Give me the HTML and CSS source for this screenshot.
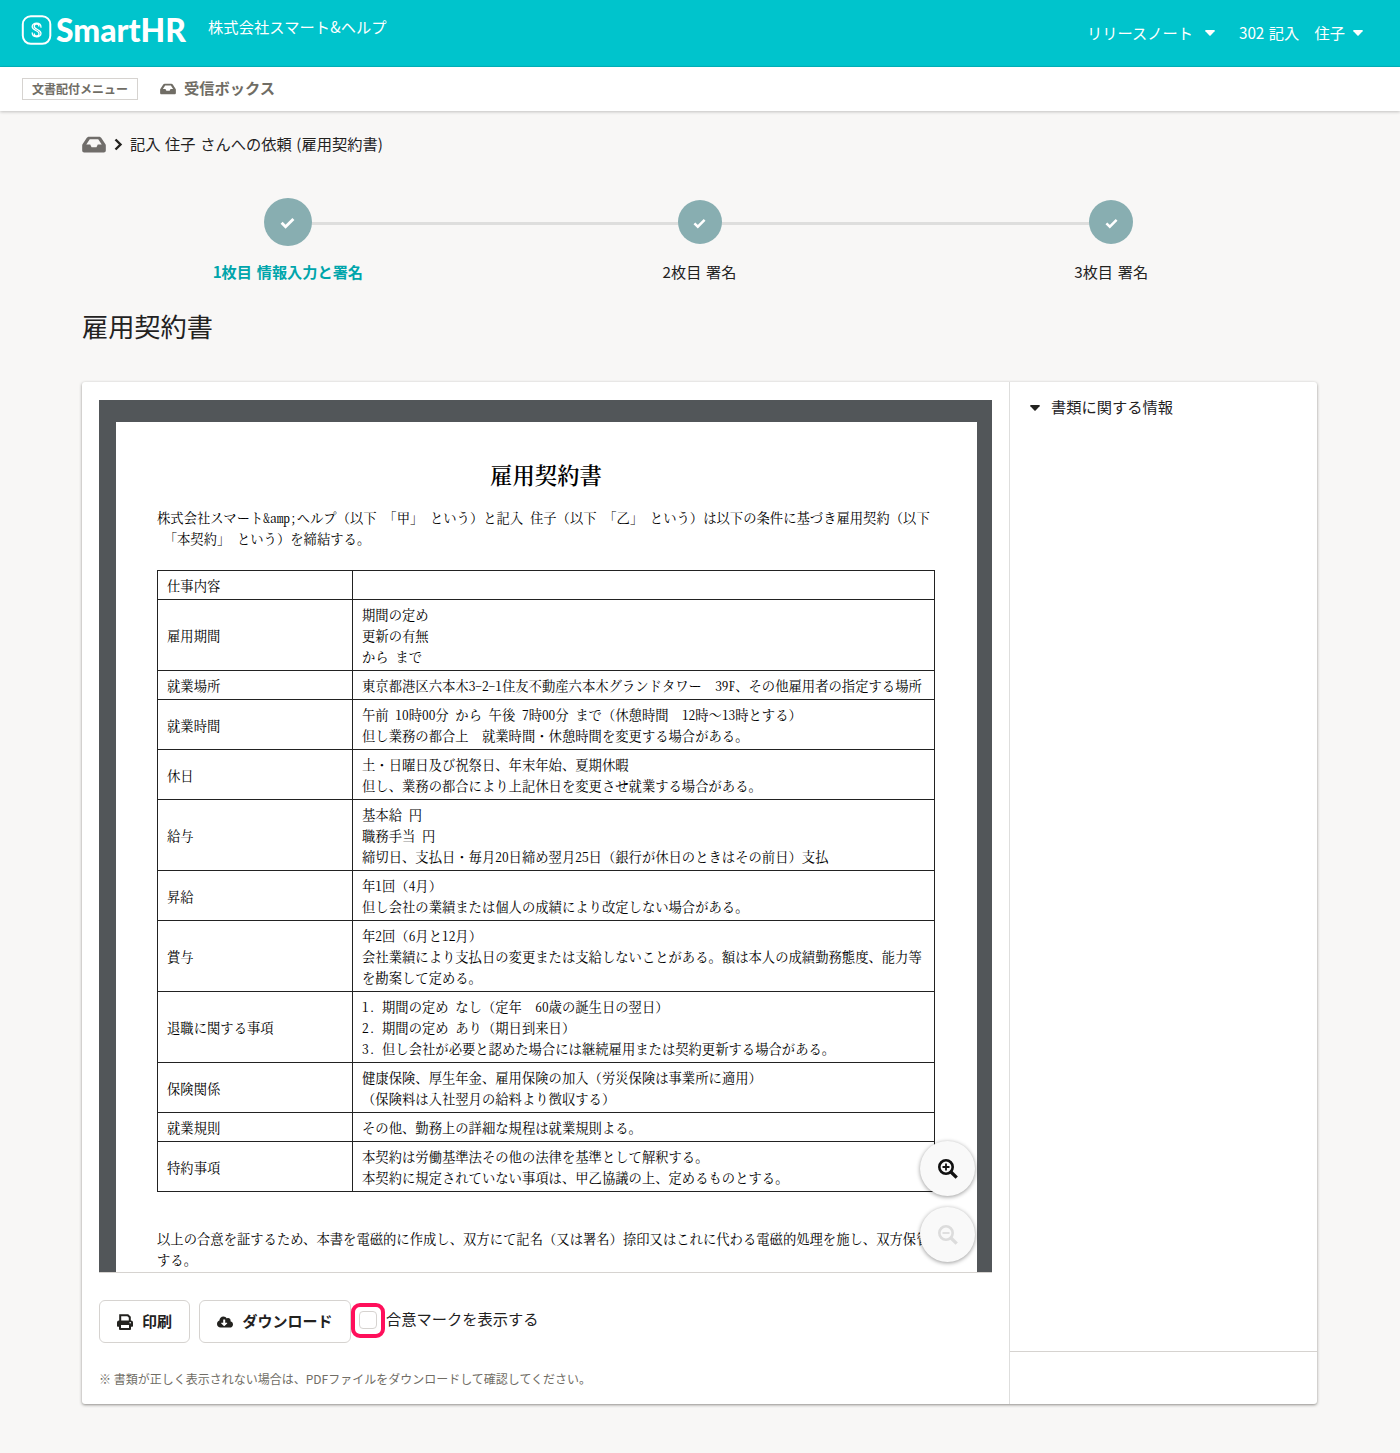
FILE: index.html
```html
<!DOCTYPE html>
<html lang="ja">
<head>
<meta charset="utf-8">
<title>雇用契約書 | SmartHR</title>
<link rel="stylesheet" href="styles.css">
</head>
<body>
<svg class="symbols" aria-hidden="true">
  <symbol id="inbox" viewBox="0 0 576 512"><path fill="currentColor" d="M568 251.8 463 93.9C451 75 431 64 409 64H167c-22 0-42 11-54 29.9L8 251.8A48 48 0 0 0 0 278.500V400c0 26.500 21.500 48 48 48h480c26.500 0 48-21.500 48-48V278.500a48 48 0 0 0-8-26.700zM185 128h206l85 128H380l-32 64H228l-32-64H100z"/></symbol>
  <symbol id="caret" viewBox="0 0 10 6"><path fill="currentColor" d="M.8 0h8.400q1 .3.400 1.200L5.600 5.600q-.6.500-1.200 0L.4 1.200Q-.2.300.8 0z"/></symbol>
  <symbol id="check" viewBox="0 0 14 11"><path d="M1.500 5.300 5.200 9 12.500 1.700" fill="none" stroke="currentColor" stroke-width="2.700"/></symbol>
  <symbol id="lens" viewBox="0 0 20 20"><circle cx="8" cy="8" r="6.700" fill="none" stroke="currentColor" stroke-width="2.600"/><path d="m13 13 5.700 5.700" stroke="currentColor" stroke-width="3.300"/></symbol>
</svg>

<header class="header">
  <div class="brand">
    <svg class="logo" viewBox="0 0 170 40" role="img" aria-label="SmartHR">
      <rect x="2.800" y="6.300" width="27.500" height="27.500" rx="8" fill="none" stroke="#fff" stroke-width="2"/>
      <path d="M21 17.200c0-5.200-8.800-5.200-8.800-.7 0 4.300 6.800 3.600 6.800 7.300 0 2.900-4.600 2.900-4.700.2M12.200 22.800c0 5.200 8.800 5.200 8.800.7 0-4.300-6.800-3.600-6.800-7.300 0-2.900 4.600-2.900 4.700-.2" fill="none" stroke="#fff" stroke-width="1.300" stroke-linecap="round"/>
      <text class="logo-text" x="36" y="31.500" textLength="130" lengthAdjust="spacingAndGlyphs">SmartHR</text>
    </svg>
    <span class="company">株式会社スマート&amp;ヘルプ</span>
  </div>
  <nav class="account">
    <span class="menu release"><span>リリースノート</span><svg class="caret"><use href="#caret"/></svg></span>
    <span class="menu user"><span>302 記入　住子</span><svg class="caret"><use href="#caret"/></svg></span>
  </nav>
</header>

<nav class="subnav">
  <span class="tag">文書配付メニュー</span>
  <svg class="inbox-small"><use href="#inbox"/></svg>
  <span class="inbox-label">受信ボックス</span>
</nav>

<main class="main">
  <div class="crumbs">
    <svg class="inbox-large"><use href="#inbox"/></svg>
    <svg class="chevron" viewBox="0 0 9 13"><path d="m1.500 1.500 5 5-5 5" fill="none" stroke="currentColor" stroke-width="2.400"/></svg>
    <span class="crumb-text">記入 住子 さんへの依頼 (雇用契約書)</span>
  </div>

  <ol class="steps">
    <li class="step current"><span class="dot"><svg class="check"><use href="#check"/></svg></span><span class="step-label">1枚目 情報入力と署名</span></li>
    <li class="step"><span class="dot"><svg class="check"><use href="#check"/></svg></span><span class="step-label">2枚目 署名</span></li>
    <li class="step"><span class="dot"><svg class="check"><use href="#check"/></svg></span><span class="step-label">3枚目 署名</span></li>
  </ol>

  <h1 class="title">雇用契約書</h1>

  <section class="panel">
    <div class="left">
      <div class="viewer">
        <article class="paper">
          <h2 class="paper-title">雇用契約書</h2>
          <p class="line">株式会社スマート<span class="hw">&amp;amp;</span>ヘルプ（以下 「甲」 という）と記入 住子（以下 「乙」 という）は以下の条件に基づき雇用契約（以下</p>
          <p class="line"> 「本契約」 という）を締結する。</p>
          <table class="terms">
            <tr><th>仕事内容</th><td></td></tr>
            <tr><th>雇用期間</th><td>期間の定め<br>更新の有無<br>から まで</td></tr>
            <tr><th>就業場所</th><td>東京都港区六本木<span class="hw">3-2-1</span>住友不動産六本木グランドタワー　<span class="hw">39F</span>、その他雇用者の指定する場所</td></tr>
            <tr><th>就業時間</th><td>午前 <span class="hw">10</span>時<span class="hw">00</span>分 から 午後 <span class="hw">7</span>時<span class="hw">00</span>分 まで（休憩時間　<span class="hw">12</span>時～<span class="hw">13</span>時とする）<br>但し業務の都合上　就業時間・休憩時間を変更する場合がある。</td></tr>
            <tr><th>休日</th><td>土・日曜日及び祝祭日、年末年始、夏期休暇<br>但し、業務の都合により上記休日を変更させ就業する場合がある。</td></tr>
            <tr><th>給与</th><td>基本給 円<br>職務手当 円<br>締切日、支払日・毎月<span class="hw">20</span>日締め翌月<span class="hw">25</span>日（銀行が休日のときはその前日）支払</td></tr>
            <tr><th>昇給</th><td>年<span class="hw">1</span>回（<span class="hw">4</span>月）<br>但し会社の業績または個人の成績により改定しない場合がある。</td></tr>
            <tr><th>賞与</th><td>年<span class="hw">2</span>回（<span class="hw">6</span>月と<span class="hw">12</span>月）<br>会社業績により支払日の変更または支給しないことがある。額は本人の成績勤務態度、能力等<br>を勘案して定める。</td></tr>
            <tr><th>退職に関する事項</th><td><span class="hw">1.</span> 期間の定め なし（定年　<span class="hw">60</span>歳の誕生日の翌日）<br><span class="hw">2.</span> 期間の定め あり（期日到来日）<br><span class="hw">3.</span> 但し会社が必要と認めた場合には継続雇用または契約更新する場合がある。</td></tr>
            <tr><th>保険関係</th><td>健康保険、厚生年金、雇用保険の加入（労災保険は事業所に適用）<br>（保険料は入社翌月の給料より徴収する）</td></tr>
            <tr><th>就業規則</th><td>その他、勤務上の詳細な規程は就業規則よる。</td></tr>
            <tr><th>特約事項</th><td>本契約は労働基準法その他の法律を基準として解釈する。<br>本契約に規定されていない事項は、甲乙協議の上、定めるものとする。</td></tr>
          </table>
          <p class="line">以上の合意を証するため、本書を電磁的に作成し、双方にて記名（又は署名）捺印又はこれに代わる電磁的処理を施し、双方保管</p>
          <p class="line">する。</p>
        </article>
        <div class="zoom">
          <button class="round" aria-label="拡大"><svg class="lens" viewBox="0 0 20 20"><use href="#lens"/><path d="M4.500 8h7M8 4.500v7" stroke="currentColor" stroke-width="1.800"/></svg></button>
          <button class="round off" aria-label="縮小"><svg class="lens" viewBox="0 0 20 20"><use href="#lens"/><path d="M4.500 8h7" stroke="currentColor" stroke-width="1.800"/></svg></button>
        </div>
      </div>
      <div class="actions">
        <button class="btn print"><svg class="ico" viewBox="0 0 16 16"><path d="M3.200 7V1.200h7.600l2 2V7" fill="none" stroke="currentColor" stroke-width="2"/><path fill="currentColor" fill-rule="evenodd" d="M2 6.500h12a2 2 0 0 1 2 2V12q0 .7-.7.700H14V15q0 1-1 1H3q-1 0-1-1v-2.300H.7Q0 12.700 0 12V8.500a2 2 0 0 1 2-2zM4 11v3h8v-3zM13.200 8a.8.800 0 1 0 0 1.600.8.800 0 0 0 0-1.600z"/></svg><span>印刷</span></button>
        <button class="btn download"><svg class="ico" viewBox="0 0 640 512"><path fill="currentColor" d="M537.600 226.600c4.100-10.700 6.400-22.400 6.400-34.600 0-53-43-96-96-96-19.700 0-38.100 6-53.300 16.200C367 64.200 315.300 32 256 32 167.600 32 96 103.600 96 192v8.100C40 219.800 0 273.200 0 336c0 79.500 64.500 144 144 144h368c70.700 0 128-57.300 128-128 0-61.900-44-113.600-102.400-125.400zm-132.900 88.700L299.300 420.700c-6.200 6.200-16.400 6.200-22.600 0L171.300 315.300c-10.100-10.100-2.900-27.300 11.300-27.300H248V176c0-8.800 7.200-16 16-16h48c8.800 0 16 7.200 16 16v112h65.400c14.200 0 21.400 17.200 11.300 27.300z"/></svg><span>ダウンロード</span></button>
        <span class="highlight"><span class="checkbox"></span></span>
        <span class="check-label">合意マークを表示する</span>
      </div>
      <p class="note">※ 書類が正しく表示されない場合は、PDFファイルをダウンロードして確認してください。</p>
    </div>
    <aside class="side">
      <div class="side-head"><svg class="caret"><use href="#caret"/></svg><span>書類に関する情報</span></div>
      <div class="side-foot"></div>
    </aside>
  </section>
</main>
</body>
</html>
```
FILE: styles.css
```css
* { box-sizing: border-box; }
body {
  margin: 0;
  min-height: 1453px;
  background: #f8f7f6;
  color: #23221f;
  font: 15.250px/24px "Noto Sans CJK JP", sans-serif;
  text-spacing-trim: space-all;
}
.symbols { display: none; }
svg { display: block; flex: none; }
span { white-space: nowrap; }

.header {
  display: flex;
  justify-content: space-between;
  height: 67px;
  padding: 0 36px 0 20px;
  background: #00c4cc;
  border-bottom: 1px solid #00b5bd;
  color: #fff;
}
.brand { display: flex; gap: 18px; padding-top: 10px; }
.logo { width: 170px; height: 40px; overflow: visible; }
.logo-text { font: 900 31.500px Lato, sans-serif; fill: #fff; }
.company { margin-top: 4px; line-height: 24px; letter-spacing: .08px; }
.account { display: flex; gap: 24px; align-items: center; }
.account .menu > span { margin-top: -2px; }
.menu { display: flex; align-items: center; }
.release { gap: 12px; }
.user { gap: 8px; margin-right: 1px; }
.user span { word-spacing: 1px; }
.caret { width: 10px; height: 6px; }

.subnav {
  display: flex;
  align-items: center;
  height: 44px;
  padding-left: 22px;
  background: #fff;
  box-shadow: 0 1px 3px rgba(0, 0, 0, .22);
  color: #706d65;
  font-weight: 700;
}
.tag {
  width: 116px;
  height: 22px;
  border: 1px solid #d6d3d0;
  font-size: 12px;
  line-height: 20px;
  text-align: center;
}
.inbox-small { width: 16px; height: 14px; margin: 0 8px 0 22px; }
.inbox-label { margin-top: -4px; }

.main { padding: 21px 83px 0 82px; }
.crumbs { display: flex; align-items: center; height: 24px; }
.inbox-large { width: 24px; height: 21px; color: #706d6a; }
.chevron { width: 9px; height: 13px; margin: 0 7px 0 8px; }
.crumb-text { margin-top: -2px; word-spacing: 1.200px; }

.steps {
  display: flex;
  margin: 42px 0 0;
  padding: 0;
  list-style: none;
}
.step {
  position: relative;
  display: flex;
  flex: 1;
  flex-direction: column;
  align-items: center;
  height: 86px;
  padding-top: 2px;
}
.step + .step::before {
  content: "";
  position: absolute;
  top: 24px;
  right: 50%;
  width: 100%;
  height: 3px;
  background: #dededd;
}
.dot {
  position: relative;
  z-index: 1;
  display: flex;
  align-items: center;
  justify-content: center;
  width: 44px;
  height: 44px;
  margin-bottom: 15px;
  border-radius: 50%;
  background: #88aeb1;
  color: #fff;
}
.check { width: 13px; height: 11px; margin-top: 2px; }
.current { padding-top: 0; color: #00a5ab; font-weight: 700; }
.current .dot { width: 48px; height: 48px; margin-bottom: 13px; }
.current .check { width: 15px; height: 12px; }
.step-label { font-size: 15.200px; word-spacing: 1.300px; }

.title {
  margin: 22px 0 0;
  font-size: 26.200px;
  font-weight: 400;
  line-height: 40px;
}

.panel {
  display: flex;
  height: 1022px;
  margin-top: 36px;
  background: #fff;
  border-radius: 3px;
  box-shadow: 0 1px 3px rgba(40, 35, 30, .5);
}
.left { width: 927px; padding: 18px 17px 0; }
.side {
  display: flex;
  flex: 1;
  flex-direction: column;
  justify-content: space-between;
  border-left: 1px solid #dededd;
}
.side-head { display: flex; gap: 11px; align-items: center; padding: 15px 20px; }
.side-head span { margin-top: -3px; }
.side-foot { height: 53px; border-top: 1px solid #d6d3d0; }

.viewer {
  position: relative;
  height: 873px;
  padding: 22px 15px 0 17px;
  overflow: hidden;
  background: #525659;
  border-bottom: 1px solid #d6d3d0;
}
.paper {
  height: 900px;
  padding: 39px 42px 0 41px;
  background: #fff;
  color: #000;
  font: 400 13.340px/21px "Liberation Serif", "Noto Serif CJK JP", "Noto Sans CJK JP", serif;
  word-spacing: 3.330px;
}
.paper-title {
  margin: 0 0 31px;
  font-size: 22.400px;
  font-weight: 600;
  line-height: 32px;
  height: 16px;
  text-align: center;
}
.line { margin: 0; height: 21px; white-space: pre; }
.hw {
  font-family: "Noto Serif CJK JP", "Liberation Serif", serif;
  font-feature-settings: "hwid";
  line-height: 0;
}
.terms {
  width: 778px;
  margin: 20px 0 37px;
  border-collapse: collapse;
  table-layout: fixed;
}
.terms th, .terms td {
  height: 29px;
  padding: 5px 0 2px 9px;
  border: 1px solid #222;
  font-weight: 400;
  text-align: left;
  white-space: nowrap;
}
.terms th { width: 195px; }

.zoom {
  position: absolute;
  right: 17px;
  bottom: 10px;
  display: grid;
  gap: 11px;
}
.round {
  display: grid;
  place-items: center;
  width: 55px;
  height: 55px;
  padding: 0;
  border: 0;
  border-radius: 50%;
  background: #f9f9f9;
  box-shadow: 0 1px 4px rgba(0, 0, 0, .4);
  color: #111;
}
.off { color: #dcdcdc; }
.lens { width: 20px; height: 20px; }

.actions { display: flex; align-items: center; margin-top: 27px; height: 43px; }
.btn {
  display: flex;
  align-items: center;
  justify-content: center;
  gap: 9px;
  height: 43px;
  padding: 0;
  border: 1px solid #d6d3d0;
  border-radius: 6px;
  background: #fff;
  color: #23221f;
  font: 700 15px/24px "Noto Sans CJK JP", sans-serif;
}
.btn span { margin-top: -2px; }
.print { width: 91px; margin-right: 9px; }
.download { width: 152px; }
.ico { width: 16px; height: 16px; }
.highlight {
  display: grid;
  place-items: center;
  width: 34px;
  height: 35px;
  margin-top: -2px;
  border: 4px solid #ff0f5b;
  border-radius: 9px;
}
.checkbox { width: 18px; height: 18px; margin-top: -1px; border: 1px solid #d6d3d0; border-radius: 4px; }
.check-label { margin: -7px 0 0 1px; }
.note { margin: 24px 0 0; color: #706d65; font-size: 12px; white-space: nowrap; }
```
